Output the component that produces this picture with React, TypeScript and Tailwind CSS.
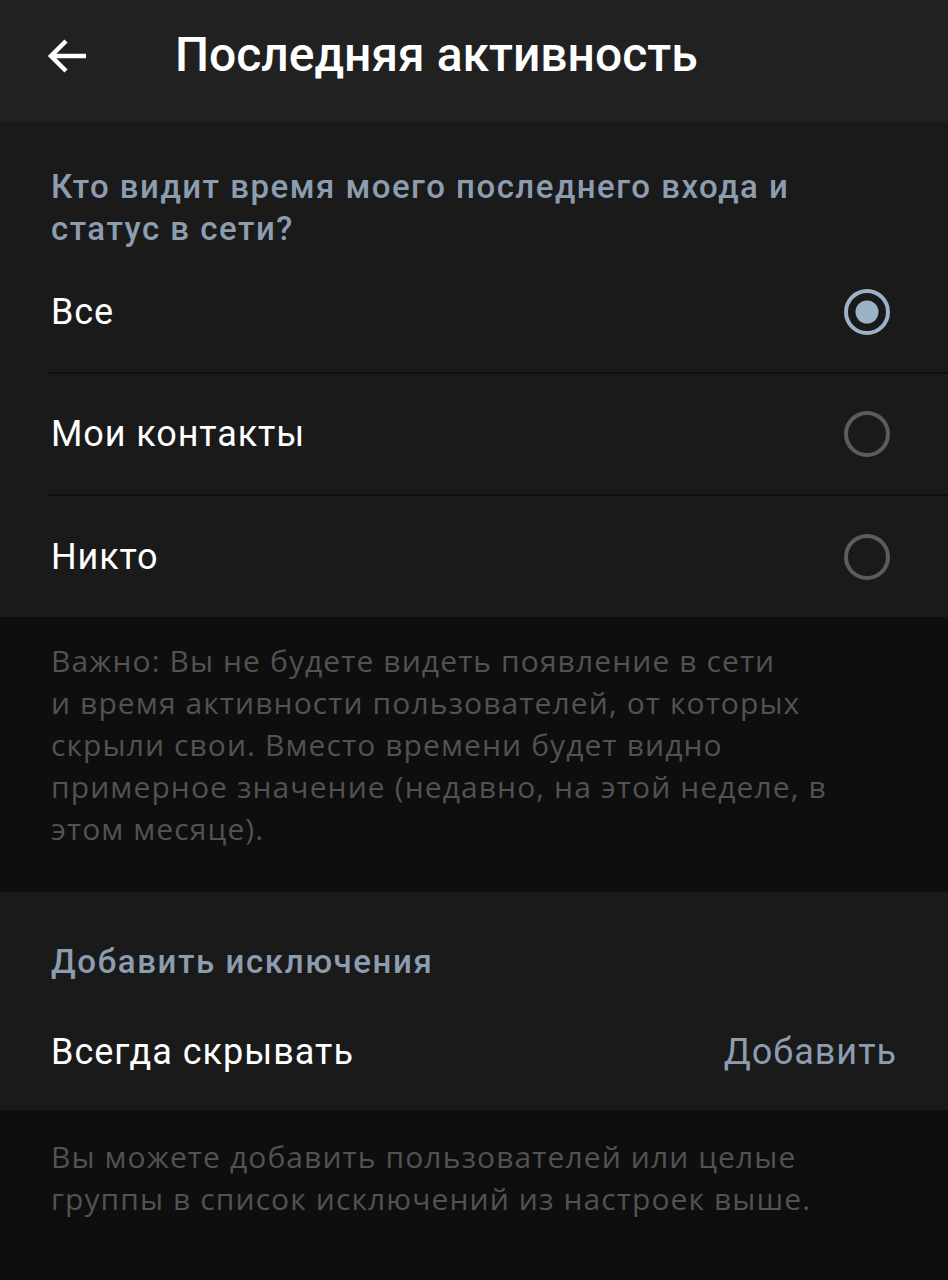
import React from 'react';

const options = [
  { label: 'Все', selected: true },
  { label: 'Мои контакты', selected: false },
  { label: 'Никто', selected: false },
];

function Radio({ selected }: { selected: boolean }) {
  return (
    <svg width="50" height="50" viewBox="0 0 50 50">
      <circle cx="25" cy="25" r="21" fill="none" stroke={selected ? '#9cb2c9' : '#5c5c5c'} strokeWidth="4" />
      {selected && <circle cx="25" cy="25" r="11.5" fill="#9cb2c9" />}
    </svg>
  );
}

export default function App() {
  return (
    <div className="w-[948px] h-[1280px] bg-[#0e0e0e] font-['Roboto',sans-serif] overflow-hidden">
      {/* Header */}
      <div className="h-[122px] bg-[#212121] flex items-center">
        <svg className="ml-[46px] mb-[10px]" width="42" height="42" viewBox="0 0 42 42">
          <path d="M40 21H5M20 6L5 21l15 15" fill="none" stroke="#ffffff" strokeWidth="4.5" strokeLinejoin="miter" />
        </svg>
        <h1 className="ml-[87px] mb-[13px] text-white text-[48px] font-medium leading-none">Последняя активность</h1>
      </div>

      {/* Who sees */}
      <div className="bg-[#1a1a1a]">
        <div className="pt-[44px] px-[51px] text-[#8d9db0] text-[33px] font-medium tracking-[1.5px] leading-[42px]">
          Кто видит время моего последнего входа и<br />статус в сети?
        </div>
        <div className="pt-[2px]">
          {options.map((o, i) => (
            <div key={o.label} className="pl-[48px]">
              <div className={`flex items-center justify-between pr-[56px] ${i < options.length - 1 ? 'h-[122px] border-b-2 border-[#0f0f0f]' : 'h-[121px]'}`}>
                <span className="pl-[3px] text-white text-[36px] tracking-[0.9px]">{o.label}</span>
                <Radio selected={o.selected} />
              </div>
            </div>
          ))}
        </div>
      </div>

      {/* Info */}
      <div className="px-[51px] pt-[23px] pb-[42px] text-[#525252] text-[30px] leading-[42px] font-['Open_Sans',sans-serif] tracking-[1.1px]">
        Важно: Вы не будете видеть появление в сети<br />
        и время активности пользователей, от которых<br />
        скрыли свои. Вместо времени будет видно<br />
        примерное значение (недавно, на этой неделе, в<br />
        этом месяце).
      </div>

      {/* Exceptions */}
      <div className="bg-[#1a1a1a]">
        <div className="pt-[49px] px-[51px] text-[#8d9db0] text-[33px] font-medium tracking-[1.6px] leading-[42px]">
          Добавить исключения
        </div>
        <div className="h-[127px] flex items-center justify-between px-[51px] pt-[11px]">
          <span className="text-white text-[36px] tracking-[1px]">Всегда скрывать</span>
          <span className="text-[#8d9db0] text-[36px] tracking-[1px]">Добавить</span>
        </div>
      </div>

      <div className="px-[51px] pt-[26px] text-[#525252] text-[30px] leading-[42px] font-['Open_Sans',sans-serif] tracking-[1.1px]">
        Вы можете добавить пользователей или целые<br />
        группы в список исключений из настроек выше.
      </div>
    </div>
  );
}
